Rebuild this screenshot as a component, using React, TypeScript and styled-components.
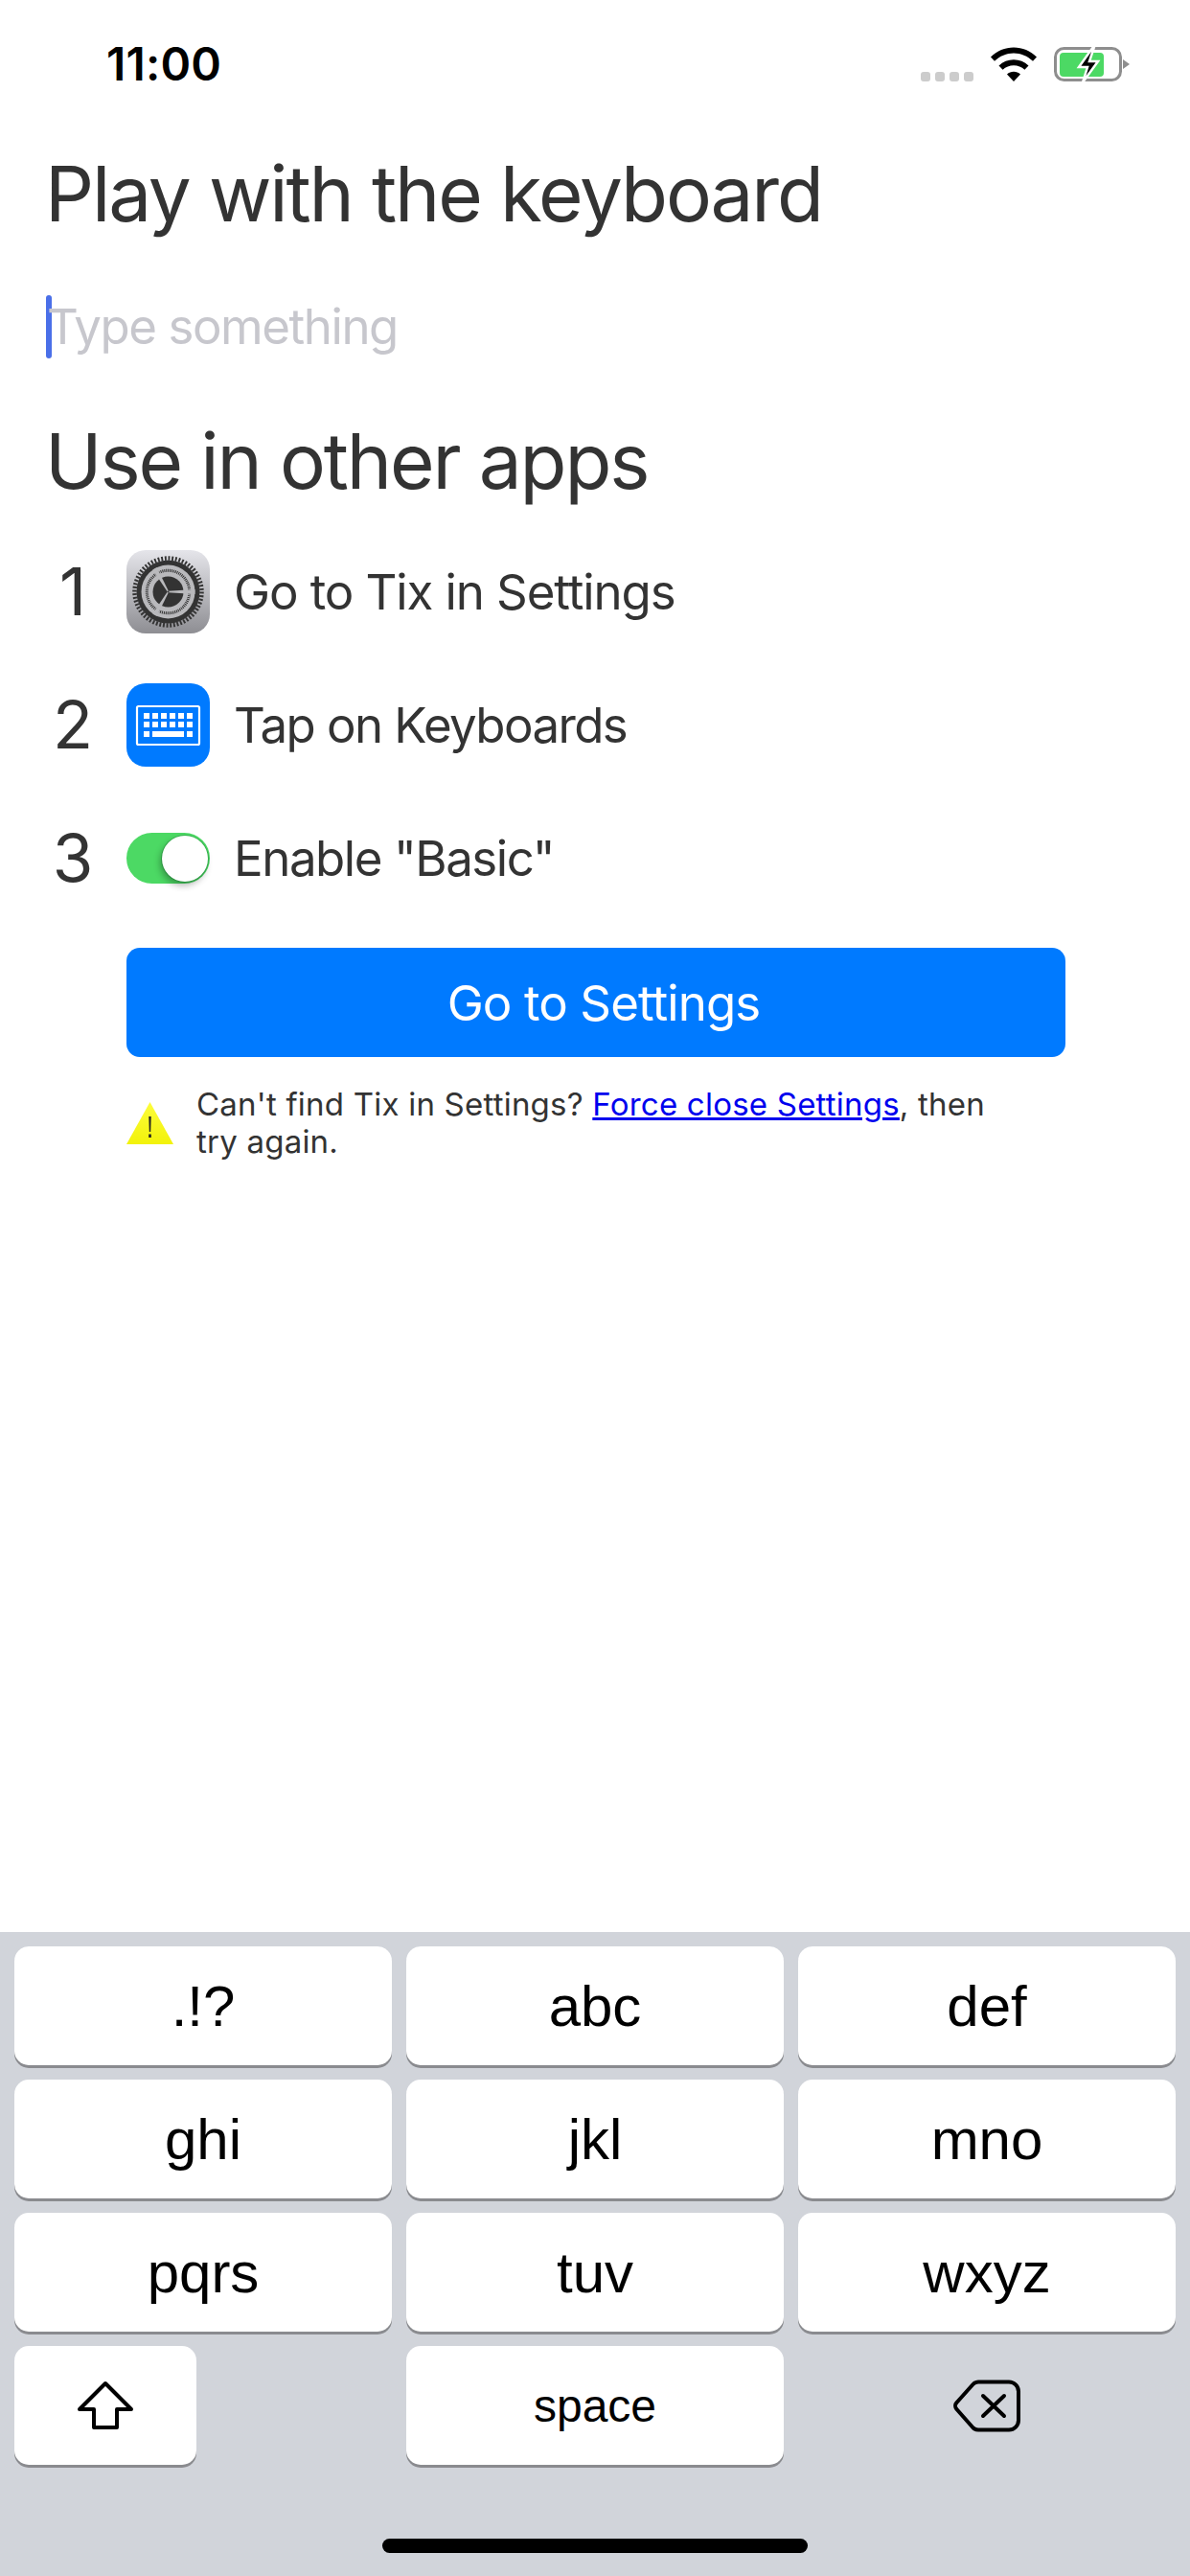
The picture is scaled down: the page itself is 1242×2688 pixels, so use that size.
import React from 'react';
import styled, { createGlobalStyle } from 'styled-components';

const GlobalStyle = createGlobalStyle`
  html, body {
    margin: 0;
    padding: 0;
    background: white;
  }
  * {
    box-sizing: border-box;
  }
`;

const Screen = styled.div`
  display: flex;
  flex-direction: column;
  width: 1242px;
  height: 2688px;
  background: white;
  font-family: Inter, "Liberation Sans", sans-serif;
  color: #333;
  overflow: hidden;
`;

const StatusBar = styled.div`
  display: flex;
  justify-content: space-between;
  align-items: flex-start;
  height: 152px;
  padding: 49px 62px 0 111px;
`;

const Clock = styled.div`
  font-size: 48px;
  line-height: 36px;
  font-weight: 600;
  letter-spacing: 0.2px;
  color: #000;
`;

const StatusIcons = styled.div`
  display: flex;
  align-items: flex-start;
  height: 36px;
`;

const SignalDots = styled.div`
  display: flex;
  gap: 5px;
  margin: 26px 17px 0 0;
`;

const SignalDot = styled.span`
  width: 10px;
  height: 10px;
  border-radius: 3px;
  background: #ccc;
`;

const Main = styled.div`
  flex: 1;
  display: flex;
  flex-direction: column;
  padding-left: 48px;
`;

const Heading = styled.h1`
  margin: 0 0 0 -1px;
  font-size: 80px;
  line-height: 100px;
  font-weight: 400;
  letter-spacing: -2.15px;
  color: #333;
`;

const InputRow = styled.div`
  display: flex;
  align-items: center;
  height: 66px;
  margin: 56px 0 57px;
`;

const Caret = styled.span`
  width: 6px;
  height: 66px;
  border-radius: 3px;
  background: #4a6fe8;
`;

const Placeholder = styled.span`
  font-size: 51px;
  line-height: 66px;
  letter-spacing: -1.45px;
  color: #c7c7cd;
  margin-left: -5px;
`;

const Steps = styled.div`
  display: flex;
  flex-direction: column;
  gap: 52px;
  margin-top: 43px;
`;

const Step = styled.div`
  display: flex;
  align-items: center;
  height: 87px;
`;

const StepNumber = styled.div`
  width: 84px;
  padding-right: 28px;
  text-align: center;
  font-size: 69px;
  line-height: 87px;
`;

const StepIconSlot = styled.div`
  display: flex;
  align-items: center;
  width: 87px;
  height: 87px;
  margin-right: 25px;
`;

const StepLabel = styled.div<{ $tracking: number }>`
  font-size: 51px;
  line-height: 87px;
  letter-spacing: ${(p) => p.$tracking}px;
`;

const Tile = styled.div<{ $blue?: boolean }>`
  width: 87px;
  height: 87px;
  border-radius: 20px;
  overflow: hidden;
  background: ${(p) => (p.$blue ? '#007aff' : 'linear-gradient(180deg, #e5e5ea 0%, #8e8e93 100%)')};
  svg {
    display: block;
  }
`;

const Toggle = styled.div`
  position: relative;
  width: 87px;
  height: 53px;
  border-radius: 27px;
  background: #4cd964;
  &::after {
    content: '';
    position: absolute;
    top: 3px;
    right: 2px;
    width: 48px;
    height: 48px;
    border-radius: 50%;
    background: white;
    box-shadow: 0 0 0 1px rgba(0, 90, 30, 0.28), -2px 4px 7px rgba(0, 0, 0, 0.3);
  }
`;

const Actions = styled.div`
  display: flex;
  flex-direction: column;
  width: 980px;
  margin: 50px 0 0 84px;
`;

const PrimaryButton = styled.button`
  width: 980px;
  height: 114px;
  border: 0;
  border-radius: 14px;
  background: #007aff;
  color: white;
  font-family: inherit;
  font-size: 51px;
  letter-spacing: -0.9px;
  padding: 0 0 0 16px;
`;

const Notice = styled.div`
  display: flex;
  align-items: center;
  margin-top: 30px;
`;

const NoticeText = styled.p`
  margin: 0 0 0 24px;
  width: 850px;
  font-size: 33px;
  line-height: 39px;
  letter-spacing: 0.22px;
  color: #333;
  a {
    color: #0000ee;
    text-decoration: underline;
  }
`;

const Keyboard = styled.div`
  display: flex;
  flex-direction: column;
  height: 672px;
  padding: 15px 15px 24px;
  background: #d1d4da;
`;

const KeyGrid = styled.div`
  display: grid;
  grid-template-columns: repeat(3, 394px);
  grid-auto-rows: 124px;
  column-gap: 15px;
  row-gap: 15px;
`;

const Key = styled.div<{ $small?: boolean; $narrow?: boolean }>`
  display: flex;
  align-items: center;
  justify-content: center;
  width: ${(p) => (p.$narrow ? '190px' : '394px')};
  height: 124px;
  border-radius: 15px;
  background: white;
  box-shadow: 0 3px 0 #8a8b8f;
  color: #000;
  font-family: "Liberation Sans", Inter, sans-serif;
  font-size: ${(p) => (p.$small ? '48px' : '60px')};
`;

const BareKey = styled.div`
  display: flex;
  align-items: center;
  justify-content: center;
  height: 124px;
`;

const HomeBar = styled.div`
  width: 444px;
  height: 15px;
  margin: auto auto 0;
  border-radius: 8px;
  background: #000;
`;

const Wifi = () => (
  <svg width="50" height="37" viewBox="0 0 50 37">
    <path d="M1 13.5C7.5 7.2 16 3.6 25 3.6s17.5 3.6 24 9.9l-4 4.3C39.500 12.500 32.500 9.500 25 9.500S10.500 12.500 5 17.800z" transform="translate(0 -3)" />
    <path d="M9.500 22.500C13.700 18.500 19.200 16.300 25 16.300s11.300 2.200 15.500 6.200l-4.100 4.300C33.300 23.900 29.300 22.300 25 22.300s-8.300 1.600-11.400 4.500z" transform="translate(0 -3)" />
    <path d="M18 31.500c1.900-1.800 4.400-2.800 7-2.800s5.100 1 7 2.800l-7 7.500z" transform="translate(0 -3)" />
  </svg>
);

const Battery = () => (
  <svg width="80" height="37" viewBox="0 0 80 37" style={{ marginLeft: 17 }}>
    <rect x="1.500" y="1.500" width="68" height="33" rx="9" fill="none" stroke="#8e8e8e" strokeWidth="3" />
    <path d="M72 13l7 5-7 5z" fill="#8e8e8e" />
    <rect x="6" y="6" width="46" height="25" rx="4" fill="#4cd964" />
    <path d="M41 0L26 21h9l-5 16 16-22h-9l5-15z" fill="#000" stroke="white" strokeWidth="2.500" />
  </svg>
);

const SettingsGlyph = () => {
  const spokes = [0, 120, 240];
  return (
    <svg width="87" height="87" viewBox="0 0 87 87">
      <circle cx="43.500" cy="43.500" r="35" fill="none" stroke="#333" strokeWidth="4.500" strokeDasharray="1.900 1.760" />
      <circle cx="43.500" cy="43.500" r="33" fill="#333" />
      <circle cx="43.500" cy="43.500" r="28" fill="#b9b9bc" />
      <circle cx="43.500" cy="43.500" r="22" fill="none" stroke="#333" strokeWidth="3.500" strokeDasharray="1 0.900" />
      <circle cx="43.500" cy="43.500" r="20.800" fill="#b9b9bc" />
      <circle cx="43.500" cy="43.500" r="16" fill="#333" />
      {spokes.map((angle) => (
        <path
          key={angle}
          d="M43.500 42.800L71.500 41v5L43.500 44.200z"
          fill="#b9b9bc"
          transform={`rotate(${angle} 43.500 43.500)`}
        />
      ))}
      <circle cx="43.500" cy="43.500" r="1" fill="#333" />
    </svg>
  );
};

const KeyboardGlyph = () => {
  const topKeys = [0, 1, 2, 3, 4, 5];
  return (
    <svg width="87" height="87" viewBox="0 0 87 87" fill="white">
      <rect x="11" y="24" width="65" height="40" rx="1.500" fill="none" stroke="white" strokeWidth="2.200" />
      {topKeys.map((i) => (
        <React.Fragment key={i}>
          <rect x={18 + i * 9} y="31" width="6" height="6" />
          <rect x={18 + i * 9} y="40" width="6" height="6" />
        </React.Fragment>
      ))}
      <rect x="18" y="50" width="6" height="6" />
      <rect x="27" y="50" width="33" height="6" />
      <rect x="63" y="50" width="6" height="6" />
    </svg>
  );
};

const WarningGlyph = () => (
  <svg width="49" height="44" viewBox="0 0 49 44" style={{ flexShrink: 0 }}>
    <defs>
      <linearGradient id="warn" x1="0" y1="0" x2="0" y2="1">
        <stop offset="0" stopColor="#fdfd3c" />
        <stop offset="1" stopColor="#f2f20a" />
      </linearGradient>
    </defs>
    <path d="M24.500 0L49 44H0z" fill="url(#warn)" />
    <path d="M23.300 15h2.400l-.5 16h-1.400z" fill="#222" />
    <rect x="23.200" y="33.500" width="2.600" height="3.500" fill="#222" />
  </svg>
);

const ShiftGlyph = () => (
  <svg width="60" height="52" viewBox="0 0 60 52" fill="none" stroke="#000" strokeWidth="4" strokeLinejoin="round">
    <path d="M30 3L3 30h15v19h24V30h15z" />
  </svg>
);

const DeleteGlyph = () => (
  <svg width="70" height="55" viewBox="0 0 70 55" fill="none" stroke="#000" strokeWidth="4" strokeLinecap="round" strokeLinejoin="round">
    <path d="M26 2.500h32a10 10 0 0 1 10 10v30a10 10 0 0 1-10 10H26a8 8 0 0 1-5.500-2.200L3.500 31a5 5 0 0 1 0-7L20.500 5a8 8 0 0 1 5.500-2.500z" />
    <path d="M31 17l22 21M53 17L31 38" />
  </svg>
);

const letterKeys = ['.!?', 'abc', 'def', 'ghi', 'jkl', 'mno', 'pqrs', 'tuv', 'wxyz'];

export default function App() {
  return (
    <Screen>
      <GlobalStyle />
      <StatusBar>
        <Clock>11:00</Clock>
        <StatusIcons>
          <SignalDots>
            {[0, 1, 2, 3].map((i) => (
              <SignalDot key={i} />
            ))}
          </SignalDots>
          <Wifi />
          <Battery />
        </StatusIcons>
      </StatusBar>

      <Main>
        <Heading>Play with the keyboard</Heading>
        <InputRow>
          <Caret />
          <Placeholder>Type something</Placeholder>
        </InputRow>
        <Heading>Use in other apps</Heading>
        <Steps>
          <Step>
            <StepNumber>1</StepNumber>
            <StepIconSlot>
              <Tile>
                <SettingsGlyph />
              </Tile>
            </StepIconSlot>
            <StepLabel $tracking={-1.1}>Go to Tix in Settings</StepLabel>
          </Step>
          <Step>
            <StepNumber>2</StepNumber>
            <StepIconSlot>
              <Tile $blue>
                <KeyboardGlyph />
              </Tile>
            </StepIconSlot>
            <StepLabel $tracking={-1.6}>Tap on Keyboards</StepLabel>
          </Step>
          <Step>
            <StepNumber>3</StepNumber>
            <StepIconSlot>
              <Toggle />
            </StepIconSlot>
            <StepLabel $tracking={-1.45}>Enable "Basic"</StepLabel>
          </Step>
        </Steps>
        <Actions>
          <PrimaryButton>Go to Settings</PrimaryButton>
          <Notice>
            <WarningGlyph />
            <NoticeText>
              Can't find Tix in Settings? <a href="#force-close">Force close Settings</a>, then try again.
            </NoticeText>
          </Notice>
        </Actions>
      </Main>

      <Keyboard>
        <KeyGrid>
          {letterKeys.map((label) => (
            <Key key={label}>{label}</Key>
          ))}
          <Key $narrow>
            <ShiftGlyph />
          </Key>
          <Key $small>space</Key>
          <BareKey>
            <DeleteGlyph />
          </BareKey>
        </KeyGrid>
        <HomeBar />
      </Keyboard>
    </Screen>
  );
}
